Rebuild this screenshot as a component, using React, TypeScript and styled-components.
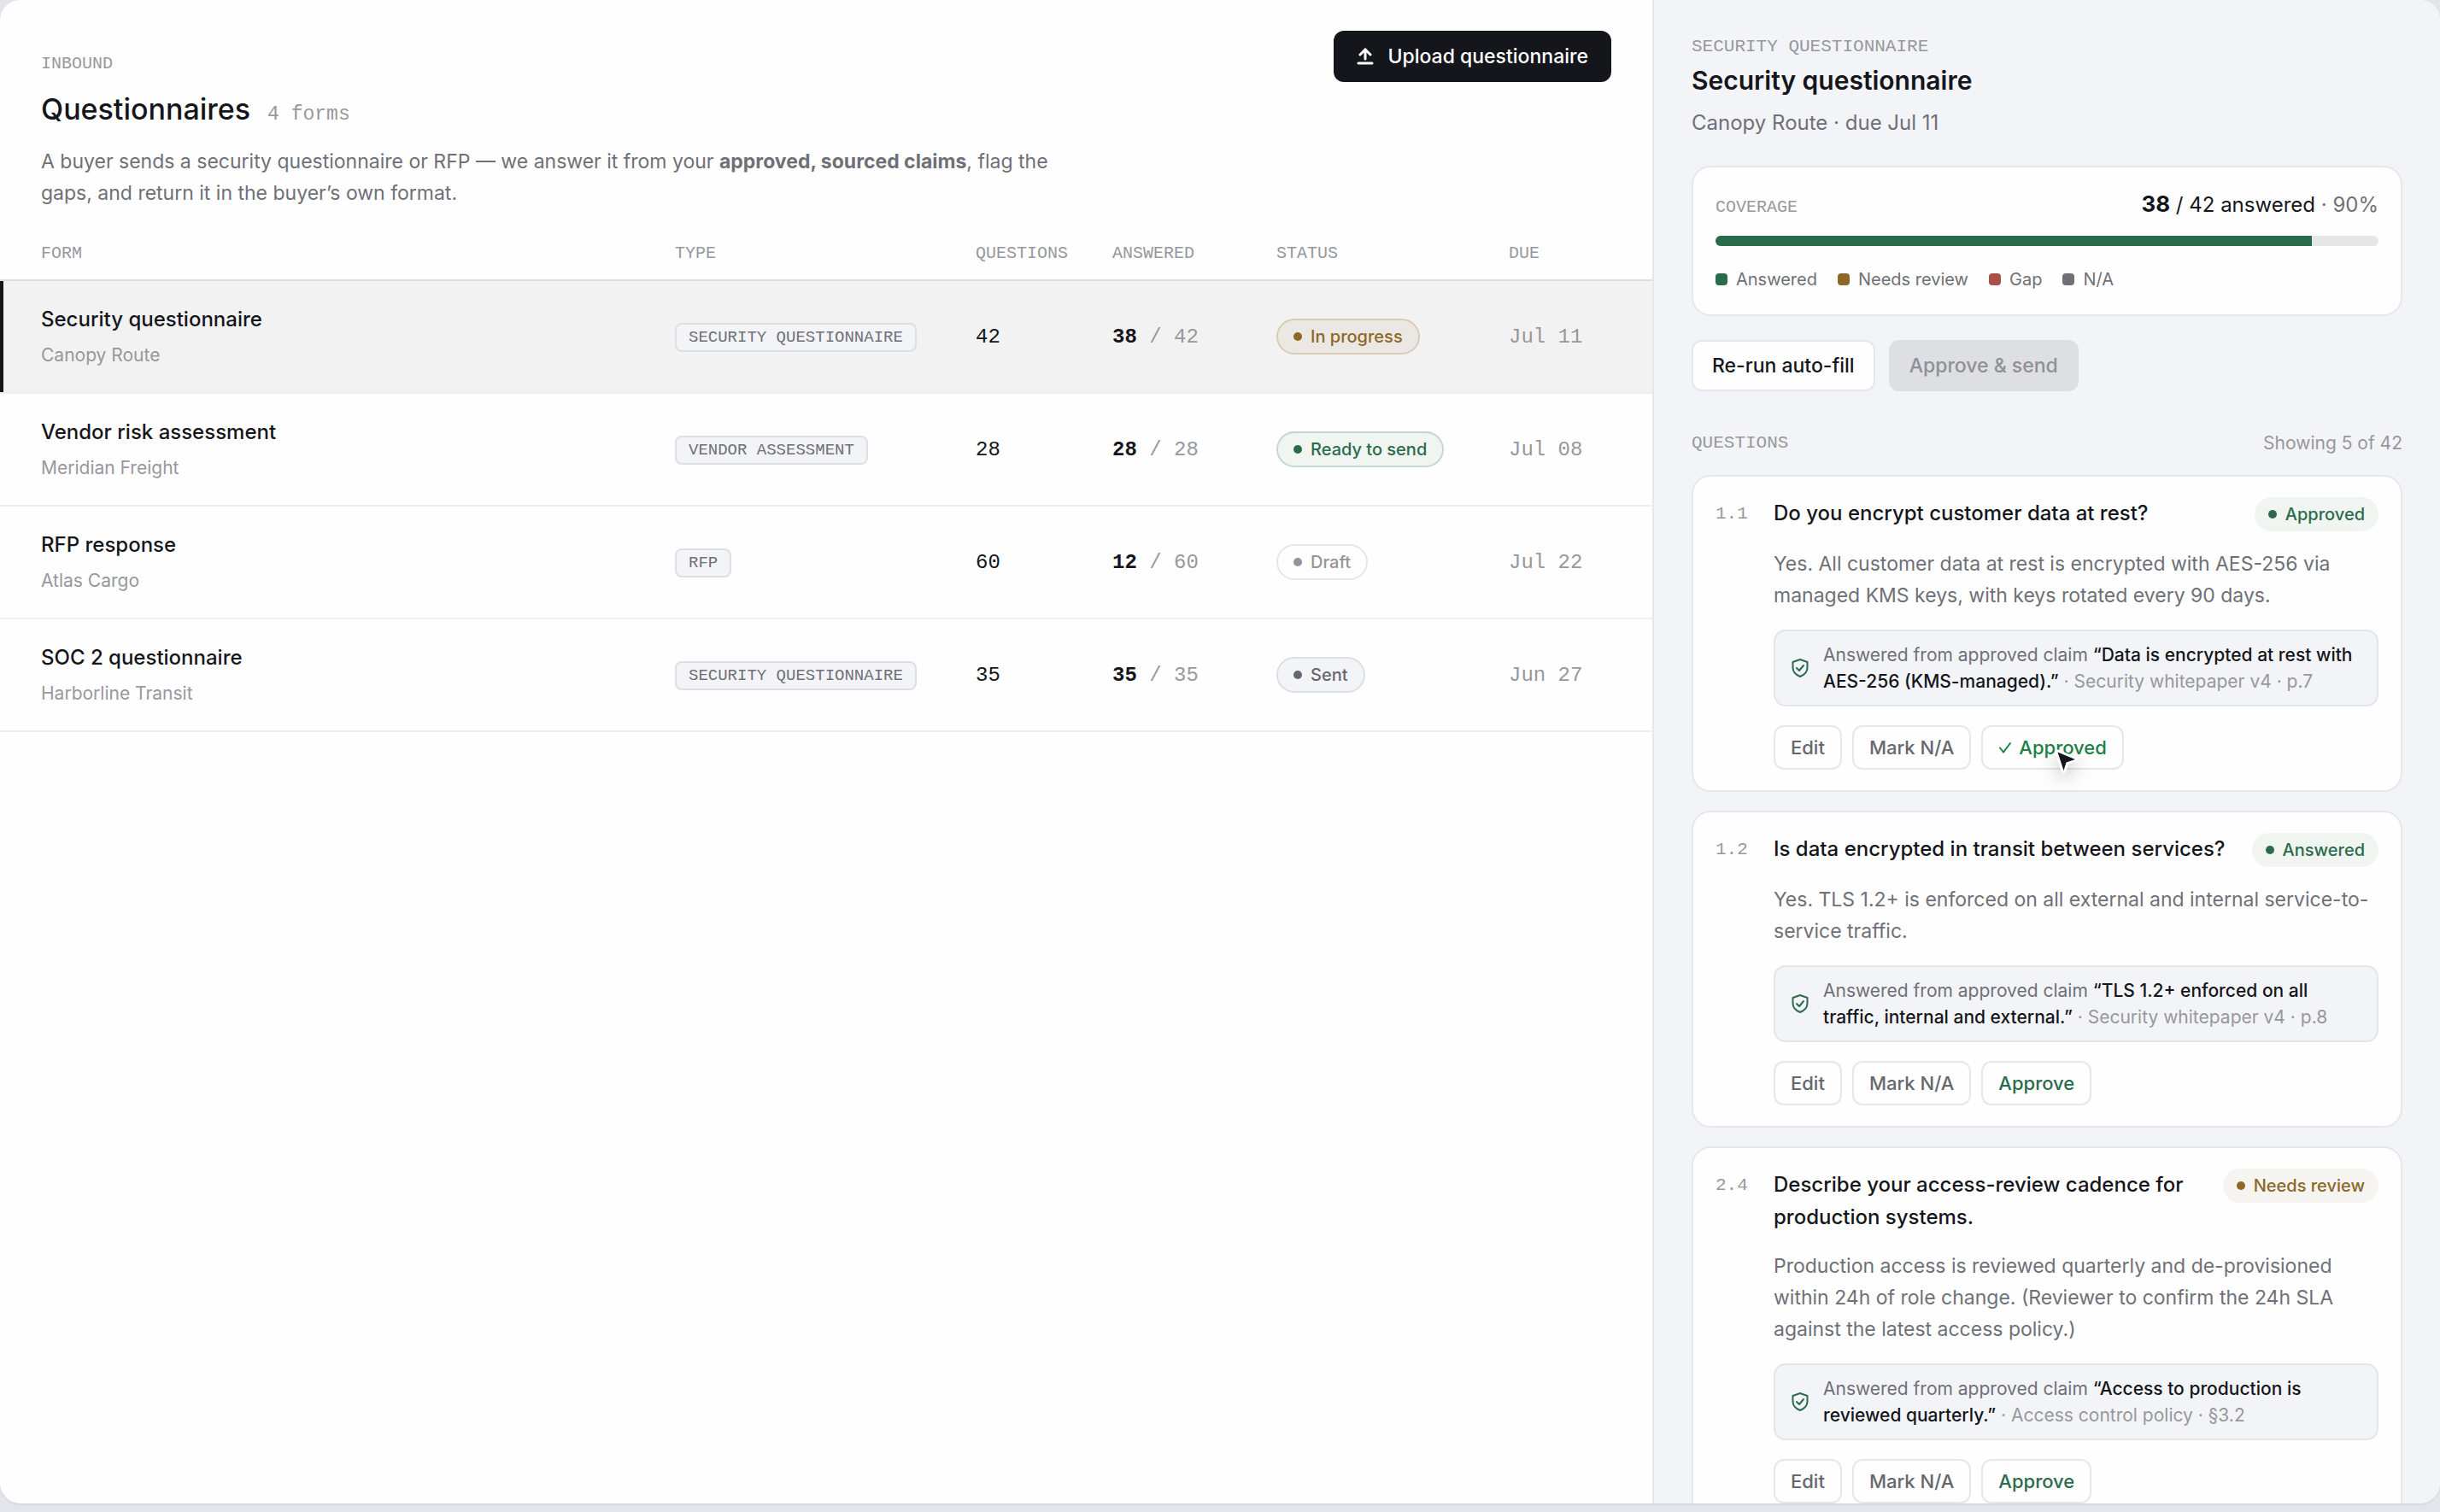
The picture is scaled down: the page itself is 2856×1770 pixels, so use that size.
import React from "react";
import styled, { createGlobalStyle, css } from "styled-components";

const sans = `Inter, "Liberation Sans", sans-serif`;
const mono = `"Liberation Mono", "DejaVu Sans Mono", monospace`;

const ink = "#15161c";
const muted = "#6f7077";
const faint = "#97989d";
const line = "#e6e7ea";
const green = "#2b6b4d";
const medium = 450;

const GlobalStyle = createGlobalStyle`
  *, *::before, *::after { box-sizing: border-box; }
  body { margin: 0; background: #e4e5ea; color: ${ink}; font-family: ${sans}; -webkit-font-smoothing: antialiased; }
  h1, h2, h3, p, ul { margin: 0; padding: 0; }
  button { font-family: inherit; cursor: pointer; }
`;

const Page = styled.div`
  display: flex;
  flex-direction: column;
  height: 100vh;
  padding-bottom: 10px;
`;

const Shell = styled.div`
  flex: 1;
  min-height: 0;
  display: grid;
  grid-template-columns: minmax(0, 1fr) 922px;
  border-radius: 24px;
  overflow: hidden;
  background: #fefefe;
  box-shadow: 0 2px 2px rgba(20, 22, 30, 0.06);
`;

const Main = styled.main`
  min-width: 0;
`;

const Header = styled.header`
  display: flex;
  justify-content: space-between;
  align-items: flex-start;
  padding: 36px 48px 0;
`;

const Intro = styled.div`
  max-width: 1220px;
  padding-top: 26px;
`;

const Eyebrow = styled.p<{ $large?: boolean }>`
  font-family: ${mono};
  font-size: ${(p) => (p.$large ? 21 : 20)}px;
  line-height: 26px;
  color: ${faint};
  text-transform: uppercase;
`;

const TitleRow = styled.div`
  display: flex;
  align-items: baseline;
  gap: 20px;
  margin-top: 16px;
`;

const Title = styled.h1`
  font-size: 34px;
  line-height: 48px;
  font-weight: ${medium};
`;

const Count = styled.span`
  font-family: ${mono};
  font-size: 23px;
  color: ${faint};
`;

const Lead = styled.p`
  margin-top: 19px;
  font-size: 23px;
  line-height: 37px;
  color: ${muted};
  strong { font-weight: 700; }
`;

const UploadButton = styled.button`
  display: inline-flex;
  align-items: center;
  justify-content: center;
  gap: 16px;
  height: 60px;
  padding: 0 27px;
  border: 0;
  border-radius: 12px;
  background: ${ink};
  color: #fff;
  font-size: 23px;
  font-weight: ${medium};
  white-space: nowrap;
`;

const Table = styled.table`
  width: 100%;
  table-layout: fixed;
  border-collapse: separate;
  border-spacing: 0;
  text-align: left;
`;

const Col = styled.col<{ $w?: number }>`
  width: ${(p) => (p.$w ? `${p.$w}px` : "auto")};
`;

const HeadCell = styled.th`
  padding: 38px 24px 16px 0;
  border-bottom: 2px solid #dcdde0;
  font-family: ${mono};
  font-size: 20px;
  line-height: 28px;
  font-weight: 400;
  color: ${faint};
  text-transform: uppercase;
  &:first-child { padding-left: 48px; }
`;

const Row = styled.tr<{ $active?: boolean }>`
  ${(p) =>
    p.$active &&
    css`
      background: #f2f2f2;
      td:first-child { box-shadow: inset 4px 0 0 ${ink}; }
    `}
`;

const Cell = styled.td`
  height: 132px;
  padding: 0 24px 0 0;
  border-bottom: 2px solid #eeeeef;
  vertical-align: middle;
  font-size: 24px;
  line-height: 32px;
  white-space: nowrap;
  &:first-child { padding-left: 48px; }
`;

const FormName = styled.div`
  font-size: 24px;
  line-height: 40px;
  font-weight: ${medium};
`;

const Company = styled.div`
  margin-top: 4px;
  font-size: 21px;
  line-height: 36px;
  color: ${faint};
`;

const Tag = styled.span`
  display: inline-flex;
  align-items: center;
  height: 34px;
  padding: 0 14px;
  border: 2px solid #dddfe4;
  border-radius: 8px;
  background: #f3f4f7;
  color: ${muted};
  font-family: ${mono};
  font-size: 19px;
  text-transform: uppercase;
`;

const Figure = styled.span<{ $soft?: boolean }>`
  font-family: ${mono};
  font-size: 24px;
  color: ${(p) => (p.$soft ? faint : ink)};
  strong { color: ${ink}; font-weight: 700; }
`;

type Tone = "amber" | "green" | "grey" | "plain";

const tones: Record<Tone, { fg: string; bg: string; edge: string }> = {
  amber: { fg: "#8c6728", bg: "#ebe8e3", edge: "#d9cbb5" },
  green: { fg: green, bg: "#f0f5f2", edge: "#c5d7ce" },
  grey: { fg: "#66676e", bg: "#f3f4f7", edge: "#dddee3" },
  plain: { fg: "#939499", bg: "#fefefe", edge: "#e6e6e8" },
};

const Status = styled.span<{ $tone: Tone }>`
  display: inline-flex;
  align-items: center;
  gap: 10px;
  height: 42px;
  padding: 0 18px;
  border: 2px solid ${(p) => tones[p.$tone].edge};
  border-radius: 21px;
  background: ${(p) => tones[p.$tone].bg};
  color: ${(p) => tones[p.$tone].fg};
  font-size: 20px;
  font-weight: ${medium};
  &::before {
    content: "";
    width: 10px;
    height: 10px;
    border-radius: 50%;
    background: currentColor;
  }
`;

const Aside = styled.aside`
  min-width: 0;
  overflow: hidden;
  padding: 42px 44px 0;
  border-left: 2px solid ${line};
  background: #f3f4f7;
`;

const AsideTitle = styled.h2`
  margin-top: 6px;
  font-size: 30px;
  line-height: 40px;
  font-weight: 600;
`;

const AsideMeta = styled.p`
  margin-top: 14px;
  font-size: 24px;
  line-height: 32px;
  color: ${muted};
`;

const Card = styled.section`
  padding: 24px 26px;
  border: 2px solid ${line};
  border-radius: 22px;
  background: #fefefe;
`;

const Coverage = styled(Card)`
  margin-top: 34px;
`;

const CoverageTop = styled.div`
  display: flex;
  align-items: baseline;
  justify-content: space-between;
  height: 38px;
`;

const CoverageFigure = styled.span`
  font-size: 24px;
  line-height: 38px;
  strong { font-size: 26px; font-weight: 700; }
`;

const Soft = styled.span`
  color: ${muted};
`;

const Track = styled.div`
  margin-top: 18px;
  height: 12px;
  border-radius: 6px;
  overflow: hidden;
  background: #e6e6e8;
`;

const Fill = styled.div`
  height: 100%;
  background: ${green};
`;

const Legend = styled.ul`
  display: flex;
  gap: 24px;
  margin-top: 24px;
  margin-bottom: 2px;
  list-style: none;
  font-size: 20px;
  line-height: 30px;
  color: ${muted};
`;

const LegendItem = styled.li<{ $color: string }>`
  display: flex;
  align-items: center;
  gap: 10px;
  &::before {
    content: "";
    width: 14px;
    height: 14px;
    border-radius: 4px;
    background: ${(p) => p.$color};
  }
`;

const Actions = styled.div`
  display: flex;
  gap: 16px;
  margin-top: 28px;
`;

const ActionButton = styled.button`
  height: 60px;
  padding: 0 22px;
  border: 2px solid ${line};
  border-radius: 12px;
  background: #fefefe;
  color: ${ink};
  font-size: 23px;
  font-weight: ${medium};
  white-space: nowrap;
  &:disabled {
    border-color: #dedfe3;
    background: #dedfe3;
    color: #8f9095;
    cursor: default;
  }
`;

const ListHead = styled.div`
  display: flex;
  align-items: center;
  justify-content: space-between;
  margin: 46px 0 22px;
  font-size: 21px;
  line-height: 30px;
  color: ${faint};
`;

const List = styled.div`
  display: flex;
  flex-direction: column;
  gap: 22px;
`;

const Question = styled(Card)`
  display: grid;
  grid-template-columns: 44px minmax(0, 1fr);
  column-gap: 24px;
`;

const Index = styled.span`
  font-family: ${mono};
  font-size: 21px;
  line-height: 40px;
  color: ${faint};
`;

const QuestionHead = styled.div`
  display: flex;
  align-items: flex-start;
  justify-content: space-between;
  gap: 24px;
  min-height: 40px;
`;

const QuestionText = styled.h3`
  font-size: 24px;
  line-height: 38px;
  font-weight: ${medium};
`;

const Pill = styled(Status)`
  flex: none;
  height: 40px;
  padding: 0 16px;
  border: 0;
  background: ${(p) => (p.$tone === "amber" ? "#f6f4f0" : tones[p.$tone].bg)};
`;

const Answer = styled.p`
  margin-top: 20px;
  font-size: 23px;
  line-height: 37px;
  color: ${muted};
`;

const Source = styled.div`
  display: flex;
  align-items: center;
  gap: 16px;
  margin-top: 21px;
  padding: 12px 16px 12px 18px;
  border: 2px solid #e3e5ea;
  border-radius: 14px;
  background: #f3f4f7;
  color: ${muted};
  font-size: 21px;
  line-height: 31px;
  svg { flex: none; }
  strong { color: ${ink}; font-weight: 500; }
`;

const Origin = styled.span`
  color: ${faint};
`;

const Controls = styled.div`
  display: flex;
  gap: 12px;
  margin-top: 22px;
`;

const SmallButton = styled.button<{ $tone?: string }>`
  position: relative;
  display: inline-flex;
  align-items: center;
  gap: 8px;
  height: 52px;
  padding: 0 18px;
  border: 2px solid ${line};
  border-radius: 12px;
  background: #fefefe;
  color: ${(p) => p.$tone ?? "#66676e"};
  font-size: 22px;
  font-weight: ${medium};
  white-space: nowrap;
`;

const Pointer = styled.svg`
  position: absolute;
  left: 80px;
  top: 22px;
  overflow: visible;
  filter: drop-shadow(0 8px 10px rgba(20, 22, 30, 0.25));
  pointer-events: none;
`;

const UploadIcon = () => (
  <svg width="20" height="20" viewBox="0 0 20 20" fill="none" stroke="currentColor" strokeWidth="3" strokeLinecap="round" aria-hidden="true">
    <path d="M10 13V3M4 8l6-6 6 6M2 18h16" />
  </svg>
);

const ShieldIcon = () => (
  <svg width="22" height="24" viewBox="0 0 22 24" fill="none" stroke={green} strokeWidth="2" strokeLinejoin="round" strokeLinecap="round" aria-hidden="true">
    <path d="M11 2l8.500 3v6.500c0 5-3.500 8.500-8.500 10.500-5-2-8.500-5.500-8.500-10.500V5z" />
    <path d="M7 12l3 3 5-6" />
  </svg>
);

const CheckIcon = () => (
  <svg width="16" height="14" viewBox="0 0 16 14" fill="none" stroke="currentColor" strokeWidth="2" strokeLinecap="round" aria-hidden="true">
    <path d="M2 7.500l4 5L14 2" />
  </svg>
);

interface Form {
  name: string;
  company: string;
  type: string;
  total: number;
  answered: number;
  status: string;
  tone: Tone;
  due: string;
}

const forms: Form[] = [
  { name: "Security questionnaire", company: "Canopy Route", type: "Security questionnaire", total: 42, answered: 38, status: "In progress", tone: "amber", due: "Jul 11" },
  { name: "Vendor risk assessment", company: "Meridian Freight", type: "Vendor assessment", total: 28, answered: 28, status: "Ready to send", tone: "green", due: "Jul 08" },
  { name: "RFP response", company: "Atlas Cargo", type: "RFP", total: 60, answered: 12, status: "Draft", tone: "plain", due: "Jul 22" },
  { name: "SOC 2 questionnaire", company: "Harborline Transit", type: "Security questionnaire", total: 35, answered: 35, status: "Sent", tone: "grey", due: "Jun 27" },
];

interface Item {
  id: string;
  text: string;
  status: string;
  tone: Tone;
  answer: string;
  claim: string;
  origin: string;
  approved?: boolean;
}

const items: Item[] = [
  {
    id: "1.1",
    text: "Do you encrypt customer data at rest?",
    status: "Approved",
    tone: "green",
    answer: "Yes. All customer data at rest is encrypted with AES-256 via managed KMS keys, with keys rotated every 90 days.",
    claim: "“Data is encrypted at rest with AES-256 (KMS-managed).”",
    origin: "Security whitepaper v4 · p.7",
    approved: true,
  },
  {
    id: "1.2",
    text: "Is data encrypted in transit between services?",
    status: "Answered",
    tone: "green",
    answer: "Yes. TLS 1.2+ is enforced on all external and internal service-to-service traffic.",
    claim: "“TLS 1.2+ enforced on all traffic, internal and external.”",
    origin: "Security whitepaper v4 · p.8",
  },
  {
    id: "2.4",
    text: "Describe your access-review cadence for production systems.",
    status: "Needs review",
    tone: "amber",
    answer: "Production access is reviewed quarterly and de-provisioned within 24h of role change. (Reviewer to confirm the 24h SLA against the latest access policy.)",
    claim: "“Access to production is reviewed quarterly.”",
    origin: "Access control policy · §3.2",
  },
];

const legend = [
  { label: "Answered", color: green },
  { label: "Needs review", color: "#8c6728" },
  { label: "Gap", color: "#a85048" },
  { label: "N/A", color: "#6f7077" },
];

export default function App() {
  return (
    <>
      <GlobalStyle />
      <Page>
        <Shell>
          <Main>
            <Header>
              <Intro>
                <Eyebrow>Inbound</Eyebrow>
                <TitleRow>
                  <Title>Questionnaires</Title>
                  <Count>4 forms</Count>
                </TitleRow>
                <Lead>
                  A buyer sends a security questionnaire or RFP — we answer it from your{" "}
                  <strong>approved, sourced claims</strong>, flag the gaps, and return it in the buyer’s own format.
                </Lead>
              </Intro>
              <UploadButton type="button">
                <UploadIcon />
                Upload questionnaire
              </UploadButton>
            </Header>
            <Table>
              <colgroup>
                <Col />
                <Col $w={352} />
                <Col $w={160} />
                <Col $w={192} />
                <Col $w={272} />
                <Col $w={168} />
              </colgroup>
              <thead>
                <tr>
                  {["Form", "Type", "Questions", "Answered", "Status", "Due"].map((h) => (
                    <HeadCell key={h} scope="col">{h}</HeadCell>
                  ))}
                </tr>
              </thead>
              <tbody>
                {forms.map((f, i) => (
                  <Row key={f.name} $active={i === 0}>
                    <Cell>
                      <FormName>{f.name}</FormName>
                      <Company>{f.company}</Company>
                    </Cell>
                    <Cell><Tag>{f.type}</Tag></Cell>
                    <Cell><Figure>{f.total}</Figure></Cell>
                    <Cell><Figure $soft><strong>{f.answered}</strong> / {f.total}</Figure></Cell>
                    <Cell><Status $tone={f.tone}>{f.status}</Status></Cell>
                    <Cell><Figure $soft>{f.due}</Figure></Cell>
                  </Row>
                ))}
              </tbody>
            </Table>
          </Main>
          <Aside>
            <Eyebrow $large>Security questionnaire</Eyebrow>
            <AsideTitle>Security questionnaire</AsideTitle>
            <AsideMeta>Canopy Route · due Jul 11</AsideMeta>
            <Coverage>
              <CoverageTop>
                <Eyebrow as="span">Coverage</Eyebrow>
                <CoverageFigure>
                  <strong>38</strong> / 42 answered <Soft>· 90%</Soft>
                </CoverageFigure>
              </CoverageTop>
              <Track>
                <Fill style={{ width: `${Math.round((38 / 42) * 100)}%` }} />
              </Track>
              <Legend>
                {legend.map((l) => (
                  <LegendItem key={l.label} $color={l.color}>{l.label}</LegendItem>
                ))}
              </Legend>
            </Coverage>
            <Actions>
              <ActionButton type="button">Re-run auto-fill</ActionButton>
              <ActionButton type="button" disabled>Approve &amp; send</ActionButton>
            </Actions>
            <ListHead>
              <Eyebrow as="span" $large>Questions</Eyebrow>
              <span>Showing 5 of 42</span>
            </ListHead>
            <List>
              {items.map((q) => (
                <Question key={q.id}>
                  <Index>{q.id}</Index>
                  <div>
                    <QuestionHead>
                      <QuestionText>{q.text}</QuestionText>
                      <Pill $tone={q.tone}>{q.status}</Pill>
                    </QuestionHead>
                    <Answer>{q.answer}</Answer>
                    <Source>
                      <ShieldIcon />
                      <span>
                        Answered from approved claim <strong>{q.claim}</strong> <Origin>· {q.origin}</Origin>
                      </span>
                    </Source>
                    <Controls>
                      <SmallButton type="button">Edit</SmallButton>
                      <SmallButton type="button">Mark N/A</SmallButton>
                      {q.approved ? (
                        <SmallButton type="button" $tone="#1d8049">
                          <CheckIcon />
                          Approved
                          <Pointer width="34" height="36" viewBox="0 0 34 36" aria-hidden="true">
                            <path d="M7.500 7.500L28 16l-10.500 3.500L14.500 29z" fill={ink} stroke="#fff" strokeWidth="6" strokeLinejoin="round" paintOrder="stroke" />
                          </Pointer>
                        </SmallButton>
                      ) : (
                        <SmallButton type="button" $tone={green}>Approve</SmallButton>
                      )}
                    </Controls>
                  </div>
                </Question>
              ))}
            </List>
          </Aside>
        </Shell>
      </Page>
    </>
  );
}
